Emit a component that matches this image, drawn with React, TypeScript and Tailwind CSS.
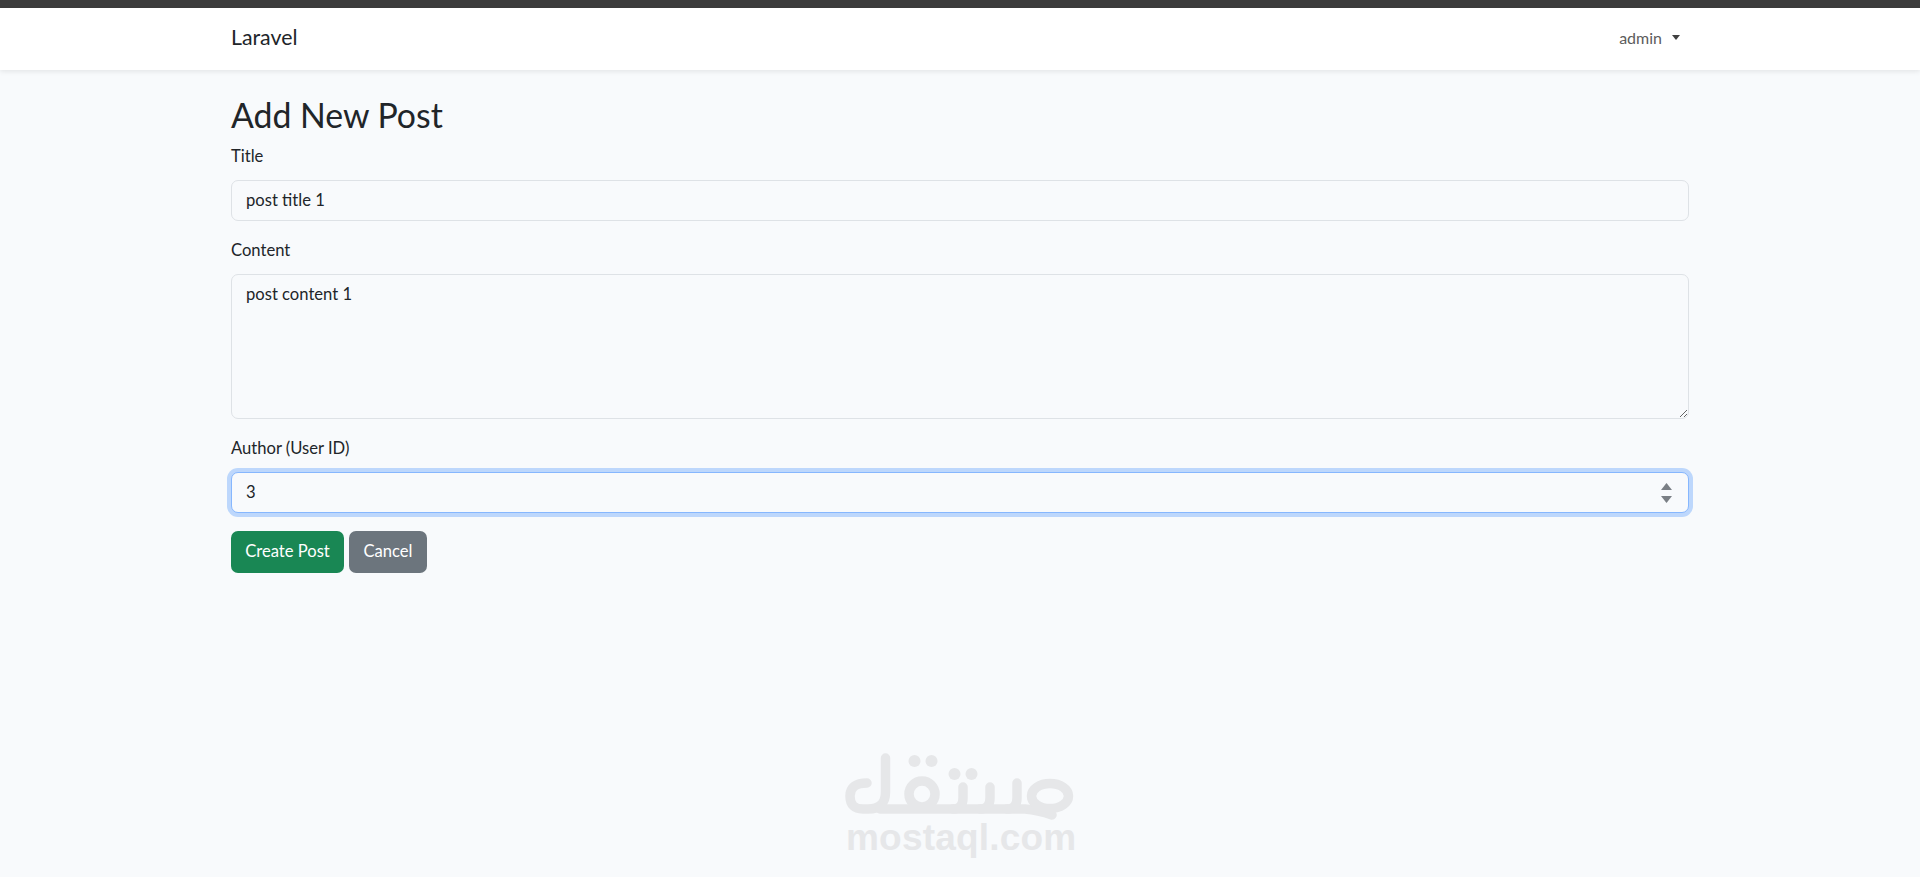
import { ChangeEvent, useState } from "react";

function Watermark() {
    return (
        <div className="absolute left-[820px] top-[730px] w-[280px] h-[147px] pointer-events-none select-none">
            <svg width="280" height="100" viewBox="0 0 280 100" fill="none" stroke="#e6e7e9" strokeWidth="9.500" strokeLinecap="round" strokeLinejoin="round">
                <path d="M65.500 28 V62 Q65.500 79 48 79 H43 Q30 79 30 66 Q30 53 47 53" />
                <circle cx="102" cy="64" r="13" />
                <path d="M60 79 H205 Q218 80 232 85" />
                <path d="M143 57 V68 Q143 79 133 79" />
                <path d="M170 57 V68 Q170 79 160 79" />
                <path d="M197 53 V68 Q197 79 187 79" />
                <ellipse cx="230" cy="66" rx="18.500" ry="12.500" />
                <g fill="#e6e7e9" stroke="none">
                    <circle cx="94.500" cy="31" r="6" />
                    <circle cx="111.500" cy="31" r="6" />
                    <circle cx="134.500" cy="44" r="6" />
                    <circle cx="151.500" cy="44" r="6" />
                </g>
            </svg>
            <div className="absolute left-[26px] top-[89px] w-[228px] text-center font-['Liberation_Sans',sans-serif] font-bold text-[37px] leading-[38px] tracking-[0.2px] text-[#e6e7e9]">
                mostaql.com
            </div>
        </div>
    );
}

export default function App() {
    const [title, setTitle] = useState("post title 1");
    const [content, setContent] = useState("post content 1");
    const [author, setAuthor] = useState("3");

    return (
        <div className="relative min-h-[877px] overflow-hidden bg-[#f8fafc] font-['Lato',sans-serif] text-[16.600px] text-[#212529]">
            <div className="h-2 bg-[#3c3c3c]" />
            <nav className="h-[62px] bg-white shadow-[0_2px_4.500px_rgba(0,0,0,0.075)]">
                <div className="mx-auto flex h-full w-[1458px] items-center justify-between pb-[3px]">
                    <a className="text-[21.300px] text-[#212529]">Laravel</a>
                    <button className="mr-[9px] flex items-center gap-[10px] text-[16px] text-[#5c5c5c]">
                        admin
                        <span className="h-0 w-0 border-x-[4.500px] border-t-[5px] border-x-transparent border-t-[#404040]" />
                    </button>
                </div>
            </nav>
            <main className="mx-auto w-[1458px] pt-[24px]">
                <h2 className="mb-[7px] text-[33.800px] leading-[43px]">Add New Post</h2>
                <form>
                    <div className="mb-[17px]">
                        <label className="mb-[12px] block leading-[24px]">Title</label>
                        <input
                            className="block h-[41px] w-full rounded-[7px] border border-[#dee2e6] bg-[#f8fafc] px-[14px] pb-[2px] outline-none"
                            value={title}
                            onChange={(e: ChangeEvent<HTMLInputElement>) => setTitle(e.target.value)}
                        />
                    </div>
                    <div className="mb-[17px]">
                        <label className="mb-[12px] block leading-[24px]">Content</label>
                        <textarea
                            className="block h-[145px] w-full rounded-[7px] border border-[#dee2e6] bg-[#f8fafc] px-[14px] py-[7px] outline-none"
                            value={content}
                            onChange={(e: ChangeEvent<HTMLTextAreaElement>) => setContent(e.target.value)}
                        />
                    </div>
                    <div className="mb-[18px]">
                        <label className="mb-[12px] block leading-[24px]">Author (User ID)</label>
                        <div className="relative">
                            <input
                                type="number"
                                className="block h-[41px] w-full appearance-none rounded-[7px] border border-[#86b7fe] bg-[#f8fafc] px-[14px] pb-[2px] shadow-[0_0_0_4px_rgba(13,110,253,0.25)] outline-none [&::-webkit-inner-spin-button]:appearance-none"
                                value={author}
                                onChange={(e: ChangeEvent<HTMLInputElement>) => setAuthor(e.target.value)}
                            />
                            <svg className="absolute right-[16px] top-[9px]" width="13" height="23" viewBox="0 0 13 23" fill="#7a7f85">
                                <path d="M6.500 2 L12 9 H1 Z" />
                                <path d="M1 15 H12 L6.500 22 Z" />
                            </svg>
                        </div>
                    </div>
                    <div className="flex gap-[5px]">
                        <button type="button" className="h-[42px] w-[113px] rounded-[7px] bg-[#198754] pb-[2px] text-white">Create Post</button>
                        <button type="button" className="h-[42px] w-[78px] rounded-[7px] bg-[#6c757d] pb-[2px] text-white">Cancel</button>
                    </div>
                </form>
            </main>
            <Watermark />
        </div>
    );
}
